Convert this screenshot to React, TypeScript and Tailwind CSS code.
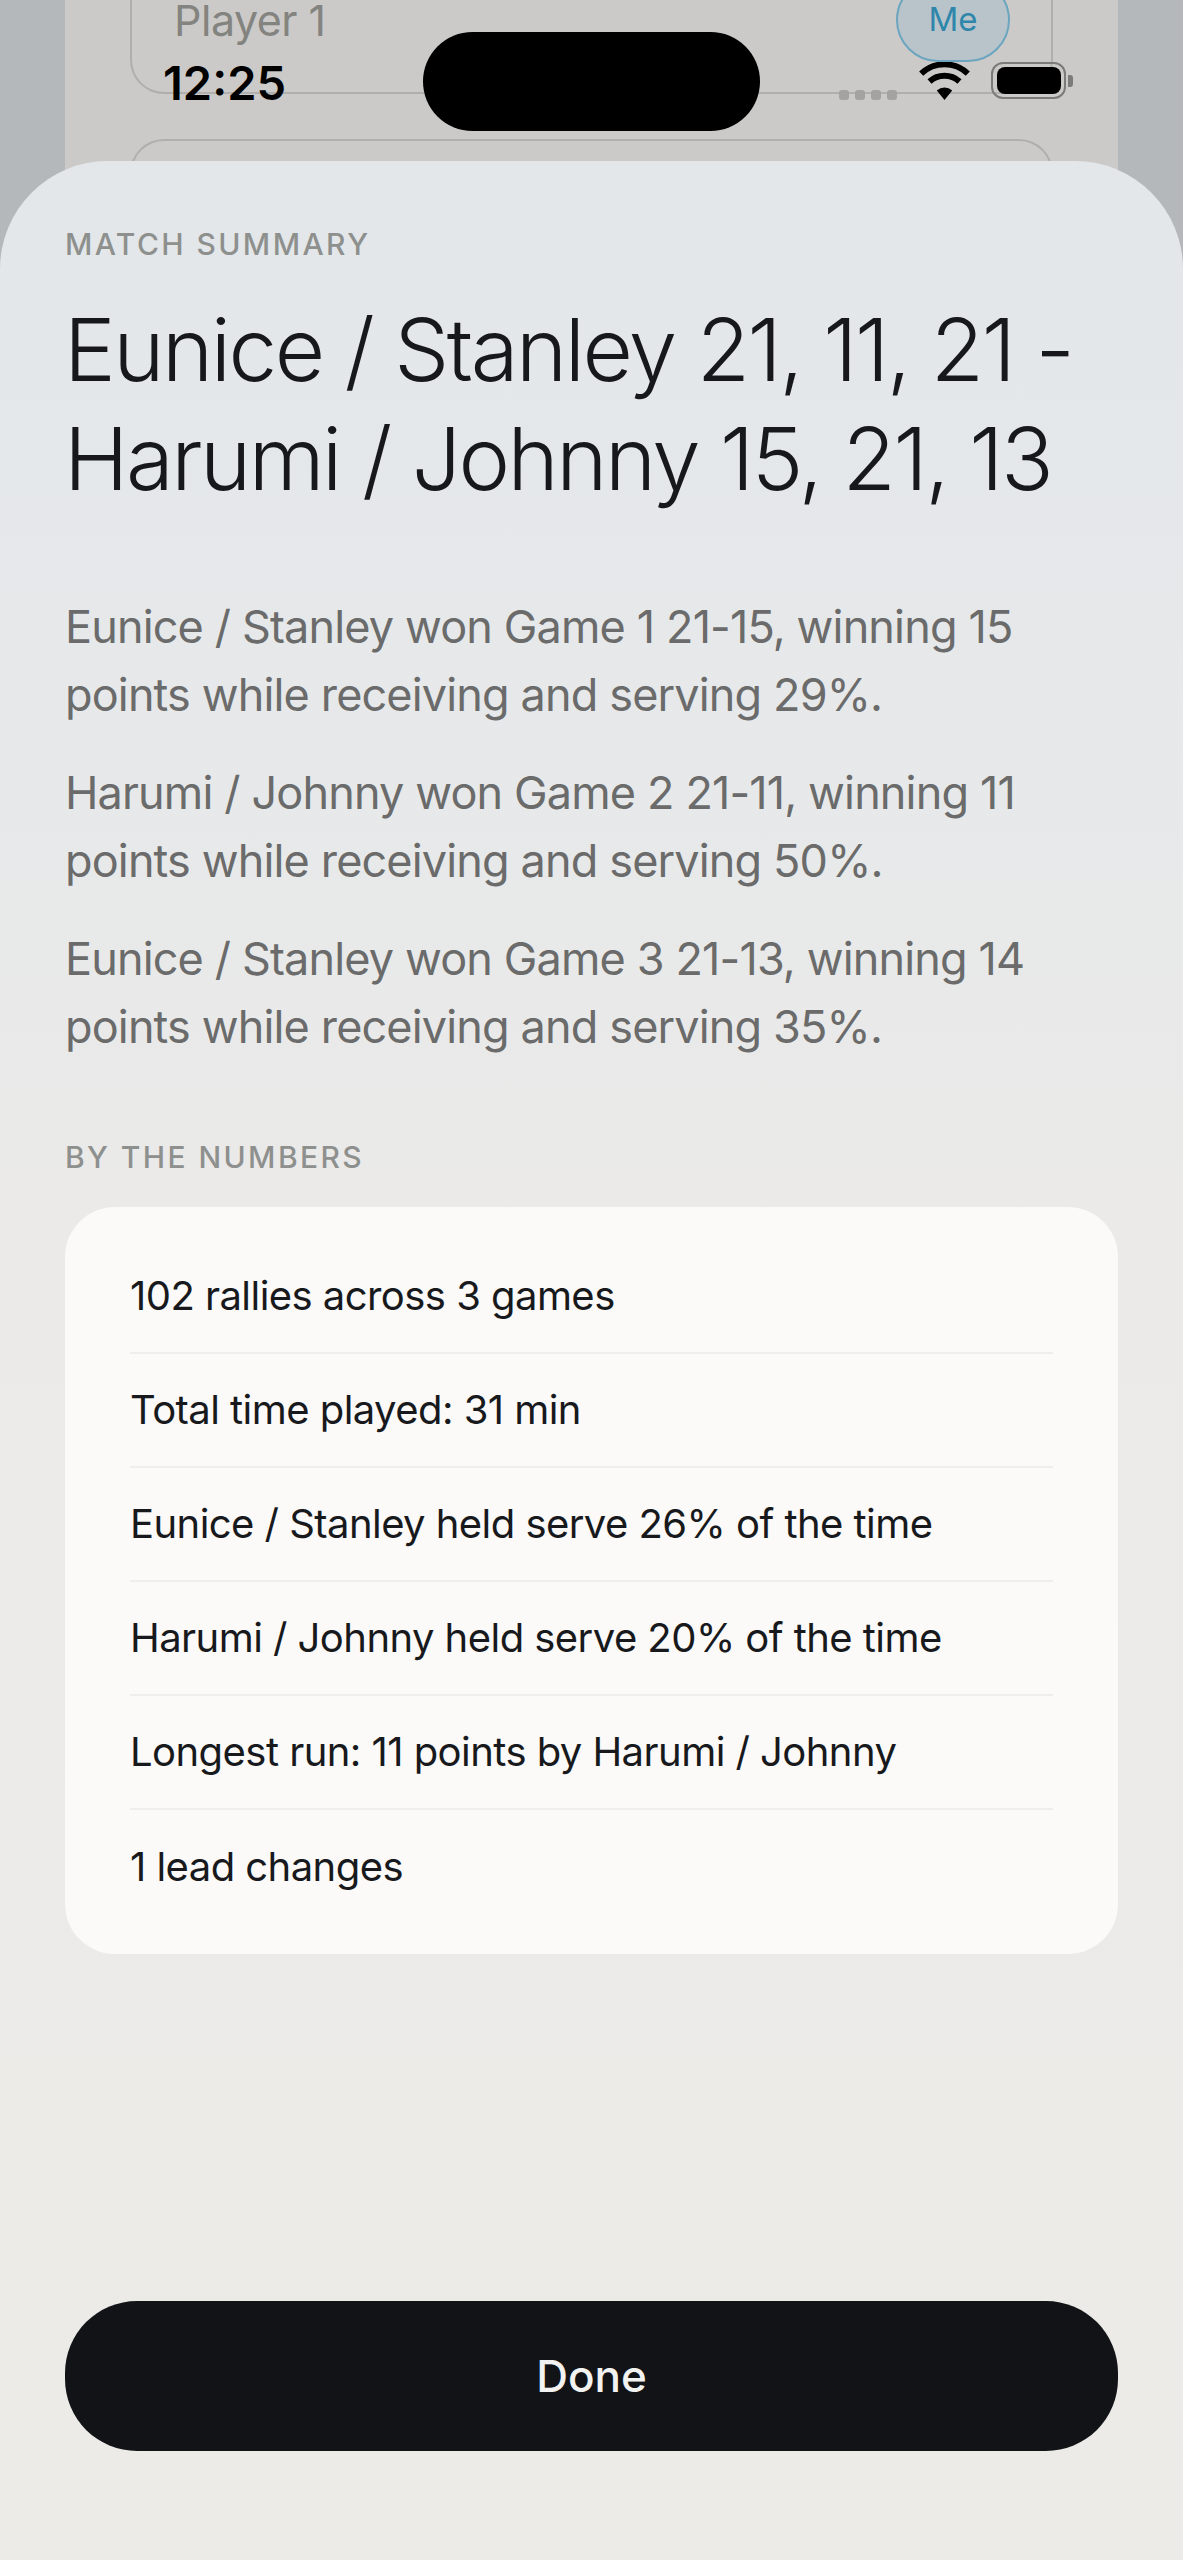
import React from 'react';

const games = [
  ['Eunice / Stanley won Game 1 21-15, winning 15', 'points while receiving and serving 29%.'],
  ['Harumi / Johnny won Game 2 21-11, winning 11', 'points while receiving and serving 50%.'],
  ['Eunice / Stanley won Game 3 21-13, winning 14', 'points while receiving and serving 35%.'],
];

const stats = [
  '102 rallies across 3 games',
  'Total time played: 31 min',
  'Eunice / Stanley held serve 26% of the time',
  'Harumi / Johnny held serve 20% of the time',
  'Longest run: 11 points by Harumi / Johnny',
  '1 lead changes',
];

function Backdrop() {
  return (
    <div className="absolute inset-0 bg-[#b4b8ba] px-[65px]">
      <div className="h-[300px] bg-[#cbcac8] px-[65px]">
        <div className="relative -mt-[46px] flex h-[140px] items-center justify-between rounded-b-[34px] border-2 border-t-0 border-[#b0afad] pl-[42px] pr-[41px]">
          <span className="-mt-[6px] text-[43px] font-normal tracking-[-0.5px] text-[#83837f]">Player 1</span>
          <span className="-mt-[7px] flex h-[84px] w-[114px] items-center justify-center rounded-full border-2 border-[#6ba5bf] bg-[#b8c4ca] text-[33px] text-[#2f86ab]">
            Me
          </span>
        </div>
        <div className="mt-[45px] h-[60px] rounded-t-[34px] border-2 border-b-0 border-[#b0afad]" />
      </div>
    </div>
  );
}

function WifiIcon() {
  return (
    <svg width="51" height="38" viewBox="0 0 51 38" fill="none" aria-hidden="true">
      <path d="M25.5 38 17.8 28.4a12 12 0 0 1 15.4 0Z" fill="#000" />
      <path d="M10.5 19.5a22.5 22.5 0 0 1 30 0" stroke="#000" strokeWidth="6" />
      <path d="M2.2 11.6a34 34 0 0 1 46.6 0" stroke="#000" strokeWidth="6" />
    </svg>
  );
}

function StatusBar() {
  return (
    <div className="absolute left-0 top-0 h-[161px] w-full">
      <span className="absolute left-[163px] top-[58px] text-[47px] font-semibold leading-[50px] text-black">12:25</span>
      <div className="absolute left-[423px] top-[32px] h-[99px] w-[337px] rounded-full bg-black" />
      <div className="absolute left-[839px] top-[90px] flex gap-[6px]">
        {[0, 1, 2, 3].map((i) => (
          <span key={i} className="h-[10px] w-[10px] rounded-[3px] bg-[#a4a3a1]" />
        ))}
      </div>
      <div className="absolute left-[919px] top-[62px]">
        <WifiIcon />
      </div>
      <div className="absolute left-[991px] top-[62px] flex items-center gap-[2px]">
        <div className="flex h-[37px] w-[75px] items-center justify-center rounded-[12px] border-2 border-[#7b7b79]">
          <div className="h-[27px] w-[64px] rounded-[8px] bg-black" />
        </div>
        <div className="h-[12px] w-[5px] rounded-r-[3px] bg-[#7b7b79]" />
      </div>
    </div>
  );
}

export default function App() {
  return (
    <div className="relative h-[2560px] w-[1183px] overflow-hidden font-['Inter',sans-serif]">
      <Backdrop />
      <div className="relative mt-[161px] flex h-[2399px] flex-col rounded-t-[108px] bg-gradient-to-b from-[#e3e7ea] from-5% via-[#ebeae9] via-45% to-[#ecebe7] px-[65px]">
        <p className="mt-[65px] text-[30px] font-medium uppercase leading-[36px] tracking-[2.4px] text-[#8e908e]">Match Summary</p>
        <h1 className="mt-[33px] -ml-[1px] text-[87px] font-light leading-[109px] tracking-[-2.5px] text-[#16181b]">
          Eunice / Stanley 21, 11, 21 -<br />Harumi / Johnny 15, 21, 13
        </h1>
        <div className="mt-[80px] flex flex-col gap-[30px]">
          {games.map((lines) => (
            <p key={lines[0]} className="text-[45px] leading-[68px] tracking-[-0.85px] text-[#6a6b6a]">
              {lines[0]}
              <br />
              {lines[1]}
            </p>
          ))}
        </div>
        <p className="mt-[78px] text-[30px] font-medium uppercase leading-[36px] tracking-[2.4px] text-[#8e908e]">By the numbers</p>
        <div className="mt-[32px] rounded-[50px] bg-[#fbfaf8] px-[65px] pb-[30px] pt-[33px]">
          {stats.map((s) => (
            <div key={s} className="flex h-[114px] items-center border-b-2 border-[#efeeec] text-[40px] tracking-[-0.55px] text-[#17191c] last:border-b-0">
              {s}
            </div>
          ))}
        </div>
        <button className="mt-[347px] h-[150px] w-full rounded-[72px] bg-[#111317] text-[44px] font-medium text-[#f2f2f0]">Done</button>
      </div>
      <StatusBar />
    </div>
  );
}
